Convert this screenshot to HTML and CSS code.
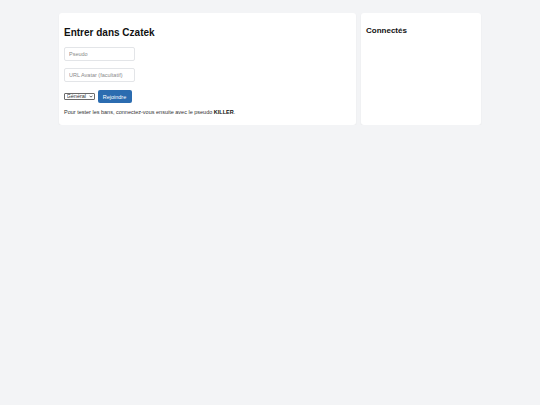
FILE: index.html
```html
<!DOCTYPE html>
<html lang="fr">
<head>
<meta charset="utf-8">
<title>Czatek</title>
<link rel="stylesheet" href="styles.css">
</head>
<body>
<div class="layout">
  <section class="card join">
    <h1 class="title">Entrer dans Czatek</h1>
    <input class="field" type="text" placeholder="Pseudo">
    <input class="field" type="text" placeholder="URL Avatar (facultatif)">
    <div class="actions">
      <span class="room-wrap">
        <select class="room">
          <option>Général</option>
        </select>
        <svg class="chev" viewBox="0 0 6 4" width="4" height="3" aria-hidden="true"><path d="M0.8 0.8 L3 3 L5.2 0.8" fill="none" stroke="#333" stroke-width="1.1"/></svg>
      </span>
      <button class="btn" type="button">Rejoindre</button>
    </div>
    <p class="hint">Pour tester les bans, connectez-vous ensuite avec le pseudo <strong>KILLER</strong>.</p>
  </section>
  <aside class="card users">
    <h2 class="subtitle">Connectés</h2>
  </aside>
</div>
</body>
</html>
```

FILE: styles.css
```css
html, body {
  margin: 0;
  padding: 0;
}
body {
  background: #f3f4f6;
  font-family: "Liberation Sans", Arial, sans-serif;
  color: #222;
}
.layout {
  width: 422px;
  margin: 13px auto 0;
  display: grid;
  grid-template-columns: 1fr 120px;
  gap: 5px;
  align-items: stretch;
}
.card {
  background: #fff;
  border-radius: 3px;
  box-shadow: 0 1px 2px rgba(0, 0, 0, 0.05);
  padding: 5px 5px 0;
  box-sizing: border-box;
  height: 112px;
}
.title {
  margin: 9px 0 0;
  font-size: 10px;
  line-height: 12px;
  font-weight: bold;
  color: #111;
}
.field {
  display: block;
  width: 71px;
  height: 14px;
  box-sizing: border-box;
  border: 1px solid #e3e5e8;
  border-radius: 2px;
  padding: 0 4px;
  font-family: inherit;
  font-size: 5.5px;
  color: #333;
  background: #fff;
  outline: none;
}
.field::placeholder {
  color: #8a8a8a;
}
.title + .field {
  margin-top: 8px;
}
.field + .field {
  margin-top: 7px;
}
.actions {
  display: flex;
  align-items: center;
  gap: 2.5px;
  margin-top: 8px;
}
.room-wrap {
  position: relative;
  display: block;
  width: 31px;
  height: 7px;
}
.room {
  -webkit-appearance: none;
  appearance: none;
  display: block;
  box-sizing: border-box;
  font-family: inherit;
  font-size: 5.5px;
  line-height: 5px;
  width: 31px;
  height: 7px;
  padding: 0 0 0 1.5px;
  margin: 0;
  border: 1px solid #6b6b6b;
  border-radius: 1px;
  background: #fff;
  color: #333;
  outline: none;
}
.chev {
  position: absolute;
  right: 2.5px;
  top: 2px;
  pointer-events: none;
}
.btn {
  width: 34px;
  height: 13px;
  padding: 0;
  border: none;
  border-radius: 2px;
  background: #2b6cb0;
  color: #fff;
  font-family: inherit;
  font-size: 5.5px;
}
.hint {
  margin: 5.5px 0 0;
  font-size: 5.5px;
  line-height: 7px;
  color: #333;
}
.hint strong {
  color: #111;
}
.subtitle {
  margin: 8.3px 0 0;
  font-size: 8px;
  line-height: 10px;
  font-weight: bold;
  color: #111;
}
```
